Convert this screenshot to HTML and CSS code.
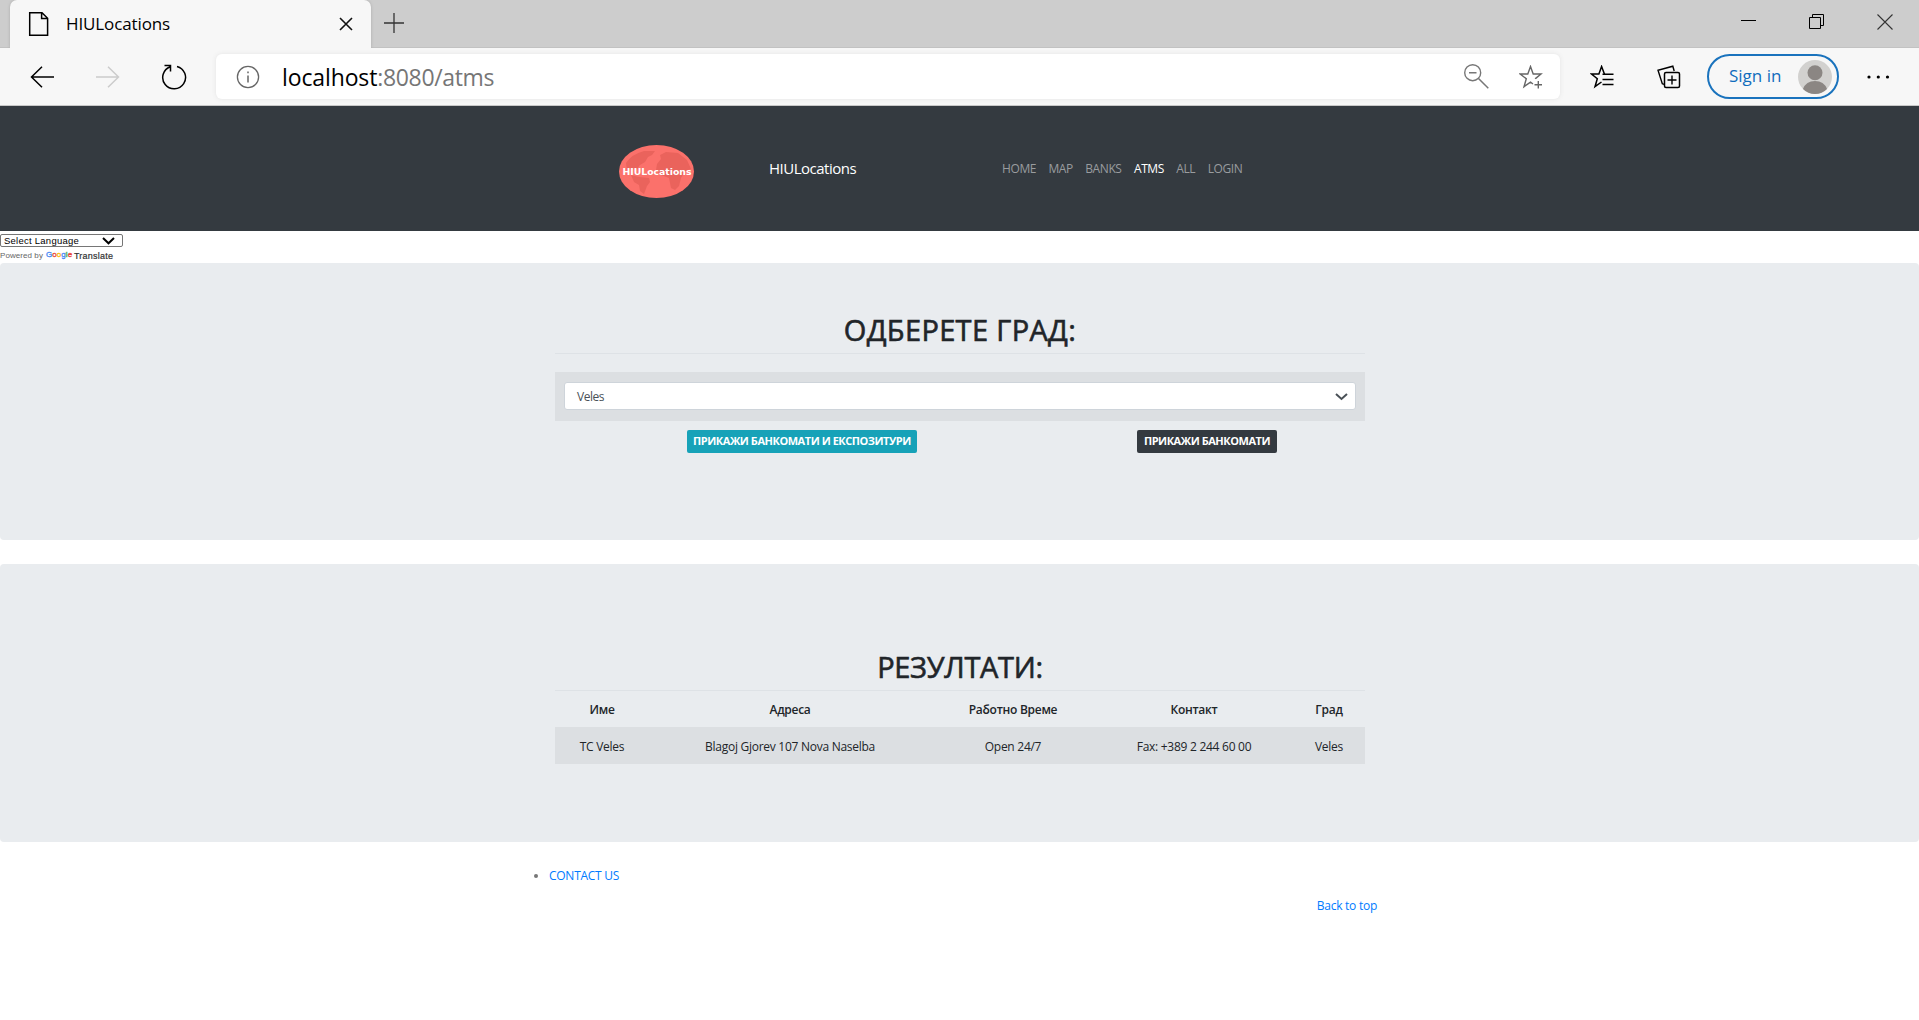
FILE: index.html
```html
<!DOCTYPE html>
<html lang="mk">
<head>
<meta charset="utf-8">
<title>HIULocations</title>
<link rel="stylesheet" href="styles.css">
</head>
<body>
<div class="tabstrip">
  <div class="tab">
    <svg class="tab-page" width="22" height="26" viewBox="0 0 22 26"><path d="M1.700 1.700H14l5.600 5.600V24.300H1.700zM13.600 1.700v5.900h6" fill="none" stroke="#000" stroke-width="1.500"/></svg>
    <span class="tab-title">HIULocations</span>
    <svg class="tab-close" width="14" height="14" viewBox="0 0 14 14"><path d="M1 1l12 12M13 1L1 13" stroke="#111" stroke-width="1.600"/></svg>
  </div>
  <svg class="newtab" width="20" height="20" viewBox="0 0 20 20"><path d="M10 0v20M0 10h20" stroke="#333" stroke-width="1.300"/></svg>
  <div class="window-buttons">
    <svg width="16" height="16" viewBox="0 0 16 16"><path d="M0 6.500h15" stroke="#000"/></svg>
    <svg width="16" height="16" viewBox="0 0 16 16"><path d="M.5 3.500h11v11H.5zM3.500 3.500V.5h11v11h-3" fill="none" stroke="#000"/></svg>
    <svg width="16" height="16" viewBox="0 0 16 16"><path d="M.5.5l15 15M15.500.5l-15 15" stroke="#333" stroke-width="1.100"/></svg>
  </div>
</div>
<div class="toolbar">
  <svg class="back" width="24" height="22" viewBox="0 0 24 22"><path d="M12 .7L1.500 11 12 21.300M1.500 11H24" fill="none" stroke="#000" stroke-width="1.500"/></svg>
  <svg class="forward" width="24" height="22" viewBox="0 0 24 22"><path d="M12 .7L22.500 11 12 21.300M22.500 11H0" fill="none" stroke="#ccc" stroke-width="1.500"/></svg>
  <svg class="reload" width="26" height="26" viewBox="0 0 26 26"><path d="M16 2.400A11.400 11.400 0 1 1 9.300 2.700M3.500 1.500H9.500V7.500" fill="none" stroke="#000" stroke-width="1.500"/></svg>
  <div class="address">
    <svg width="24" height="24" viewBox="0 0 24 24"><circle cx="12" cy="12" r="10.600" fill="none" stroke="#666" stroke-width="1.300"/><path d="M12 10.500v7M12 6.500v1.800" stroke="#666" stroke-width="1.500"/></svg>
    <span class="url">localhost<span class="url-rest">:8080/atms</span></span>
    <svg class="zoom" width="25" height="25" viewBox="0 0 25 25"><circle cx="8.700" cy="8.700" r="8" fill="none" stroke="#777" stroke-width="1.400"/><path d="M5 8.700h7.500M14.500 14.500l9.800 9.800" stroke="#777" stroke-width="1.500"/></svg>
    <svg class="star" width="24" height="24" viewBox="0 0 24 24"><path d="M17 13.700L16.700 13.400 22 9H14.200L11.500 1.500 8.800 9H1.200L7.300 13.800 5 21.700 11.500 17.200 14 19M19.300 16v7.500M15.500 19.700H23" fill="none" stroke="#666" stroke-width="1.400"/></svg>
  </div>
  <svg class="favorites" width="24" height="24" viewBox="0 0 24 24"><path d="M14.500 9.300L11.600 1.500 8.900 9H1.500L7.300 13.700 5 21.700 11.500 17" fill="none" stroke="#000" stroke-width="1.500"/><path d="M12.500 9.300H23.500M12.500 14.400H23.500M12.500 19.400H23.500" stroke="#000" stroke-width="1.500"/></svg>
  <svg class="collections" width="24" height="24" viewBox="0 0 24 24"><rect x="7.500" y="7.500" width="15" height="15" rx="1.500" fill="none" stroke="#000" stroke-width="1.500"/><path d="M15 10.500v9M10.500 15h9M7 19.300L5.300 18.700 1 5.200 15.800 1.200 17.200 6" fill="none" stroke="#000" stroke-width="1.400"/></svg>
  <div class="signin"><span>Sign in</span>
    <svg width="34" height="34" viewBox="0 0 34 34"><circle cx="17" cy="17" r="17" fill="#d2d1cf"/><circle cx="17" cy="12.800" r="7.500" fill="#8b8683"/><path d="M5 29q3-8 12-8t12 8q-5 5-12 5T5 29z" fill="#8b8683"/></svg>
  </div>
  <svg class="more" width="24" height="4" viewBox="0 0 24 4"><circle cx="2" cy="2" r="1.600"/><circle cx="11.300" cy="2" r="1.600"/><circle cx="20.500" cy="2" r="1.600"/></svg>
</div>
<header class="navbar">
  <svg class="logo" width="76" height="54" viewBox="0 0 76 54">
    <ellipse cx="37.500" cy="26.500" rx="37.500" ry="26.500" fill="#fb716b"/>
    <path d="M7 18Q13 9 25 6L36 6 33 10 29 12 26 17 21 20 18 24 12 23 8 26zM12 30L20 32 30 33 31 37 28 41 25 49 21 46 20 40 15 37zM38 19L42 14 41 10 47 7 59 8 68 15 72 24 66 26 62 33 60 41 56 45 52 43 50 33 42 30 37 25z" fill="#ea635c"/>
    <text x="3.500" y="30" textLength="69" lengthAdjust="spacingAndGlyphs">HIULocations</text>
  </svg>
  <a class="brand">HIULocations</a>
  <nav>
    <a>HOME</a>
    <a>MAP</a>
    <a>BANKS</a>
    <a class="active">ATMS</a>
    <a>ALL</a>
    <a>LOGIN</a>
  </nav>
</header>
<div class="translate">
  <div class="language"><span>Select Language</span><svg width="13" height="8" viewBox="0 0 13 8"><path d="M1 1l5.500 5.300L12 1" fill="none" stroke="#000" stroke-width="2"/></svg></div>
  <div class="powered"><span>Powered by</span><span class="google"><i class="b">G</i><i class="r">o</i><i class="y">o</i><i class="b">g</i><i class="g">l</i><i class="r">e</i></span><span class="word">Translate</span></div>
</div>
<section class="jumbotron">
  <div class="container">
    <h1 class="choose">ОДБЕРЕТЕ ГРАД:</h1>
    <div class="picker"><div class="select"><span>Veles</span><svg width="13" height="8" viewBox="0 0 13 8"><path d="M1 1l5.500 5L12 1" fill="none" stroke="#495057" stroke-width="2"/></svg></div></div>
    <div class="actions">
      <a class="btn info">ПРИКАЖИ БАНКОМАТИ И ЕКСПОЗИТУРИ</a>
      <a class="btn dark">ПРИКАЖИ БАНКОМАТИ</a>
    </div>
  </div>
</section>
<section class="jumbotron results">
  <div class="container">
    <h1>РЕЗУЛТАТИ:</h1>
    <table>
      <colgroup><col class="c1"><col class="c2"><col class="c3"><col class="c4"><col class="c5"></colgroup>
      <tr><th>Име</th><th>Адреса</th><th>Работно Време</th><th>Контакт</th><th>Град</th></tr>
      <tr class="row"><td>TC Veles</td><td>Blagoj Gjorev 107 Nova Naselba</td><td>Open 24/7</td><td>Fax: +389 2 244 60 00</td><td>Veles</td></tr>
    </table>
  </div>
</section>
<footer>
  <ul><li><a>CONTACT US</a></li></ul>
  <p><a>Back to top</a></p>
</footer>
</body>
</html>
```
FILE: styles.css
```css
* { box-sizing: border-box; }
body { margin: 0; height: 1020px; overflow: hidden; background: #fff; color: #212529; font: 12px/18px "Open Sans", "Noto Sans", sans-serif; white-space: nowrap; }
svg { display: block; flex: none; }

.tabstrip { display: flex; height: 48px; background: #cdcdcd; box-shadow: inset 0 -1px #c2c2c2; }
.tab { display: flex; align-items: center; width: 361px; margin-left: 10px; background: #f7f7f7; border-radius: 7px 7px 0 0; box-shadow: 0 0 3px #aaa; clip-path: inset(0 -4px 0 -4px); }
.tab-page { margin: 0 0 0 18px; }
.tab-title { margin-left: 16px; font-size: 17px; letter-spacing: -.12px; color: #000; flex: 1; }
.tab-close { margin-right: 18px; }
.newtab { margin: 13px 0 0 13px; }
.window-buttons { display: flex; gap: 52px; margin: 14px 26px 0 auto; }

.toolbar { display: flex; align-items: center; height: 58px; background: #f7f7f7; border-bottom: 1px solid #c8c8c8; }
.back { margin-left: 30px; }
.forward { margin-left: 42px; }
.reload { margin-left: 41px; }
.address { display: flex; align-items: center; width: 1344px; height: 45px; margin-left: 29px; padding-left: 20px; background: #fff; border-radius: 6px; box-shadow: 0 0 5px #e4e4e4; }
.url { flex: 1; margin-left: 22px; font-size: 23px; line-height: 30px; letter-spacing: -.12px; color: #000; }
.url-rest { color: #767676; letter-spacing: -.35px; }
.zoom { margin-right: 30px; }
.star { margin-right: 17px; }
.favorites { margin-left: 30px; }
.collections { margin-left: 43px; }
.signin { display: flex; align-items: center; justify-content: space-between; width: 132px; height: 45px; margin-left: 26px; padding: 0 5px 2px 20px; border: 2px solid #1a73bd; border-radius: 23px; color: #0f6cbd; font-size: 17px; }
.signin svg { margin-top: 2px; }
.more { margin-left: 28px; }

.navbar { display: flex; height: 125px; background: #343a40; }
.logo { margin: 39px 0 0 619px; }
.logo text { font: bold 8px "DejaVu Sans", sans-serif; fill: #fff; }
.brand { width: 233px; margin: 53px 0 0 74px; color: #fff; font-size: 15px; letter-spacing: -.5px; }
nav { display: flex; gap: 12.400px; margin-top: 54px; color: #999c9f; letter-spacing: -.4px; }
.active { color: #fff; }

.translate { height: 32px; padding-top: 3px; font: 9.500px/12px "Liberation Sans", Arial, sans-serif; }
.language { display: flex; align-items: center; justify-content: space-between; width: 123px; height: 13px; padding: 0 7px 0 3px; border: 1px solid #767676; border-radius: 2px; color: #000; letter-spacing: .25px; }
.powered { display: flex; margin-top: 3px; color: #666; font-size: 8px; letter-spacing: .07px; }
.word { color: #333; font-size: 9px; letter-spacing: .22px; -webkit-text-stroke: .2px #333; }
.google { width: 24px; margin: -1px 4px 0 3px; font-size: 8px; -webkit-text-stroke: .3px; }
.google i { font-style: normal; }
.b { color: #4285f4; }
.r { color: #ea4335; }
.y { color: #fbbc05; }
.g { color: #34a853; }

.jumbotron { height: 277px; padding-top: 48px; background: #e9ecef; border-radius: 4px; }
.container { width: 810px; margin-left: 555px; }
h1 { margin: 0; padding-bottom: 5px; border-bottom: 1px solid #dee2e6; font-size: 29px; line-height: 37px; font-weight: 400; letter-spacing: -.3px; text-align: center; -webkit-text-stroke: .6px #212529; }
.choose { letter-spacing: .33px; }
.picker { height: 49px; margin-top: 18px; padding: 10px 9px; background: #dcdfe2; }
.select { display: flex; align-items: center; justify-content: space-between; height: 28px; padding: 2px 7px 0 12px; border: 1px solid #ced4da; border-radius: 3px; background: #fff; color: #495057; letter-spacing: -.5px; }
.select svg { margin-top: -1px; }
.actions { display: flex; margin-top: 9px; }
.btn { display: flex; align-items: center; justify-content: center; height: 23px; padding-bottom: 1px; border-radius: 2px; color: #fff; font-size: 11px; font-weight: 700; letter-spacing: -.46px; }
.info { width: 230px; margin-left: 132px; background: #17a2b8; }
.dark { width: 140px; margin-left: 220px; background: #343a40; }
.results { margin-top: 24px; height: 278px; padding-top: 84px; }
table { width: 810px; table-layout: fixed; border-collapse: collapse; text-align: center; }
th, td { height: 37px; padding: 2px 0 0; letter-spacing: -.27px; }
th { height: 36px; font-weight: 600; }
.row { background: #dcdfe2; }
.c1 { width: 94px; }
.c2 { width: 282px; }
.c3 { width: 164px; }
.c4 { width: 198px; }
.c5 { width: 72px; }

footer { width: 857px; margin: 25px auto 0; color: #777; letter-spacing: -.26px; }
ul { margin: 0; padding-left: 18px; }
footer a { color: #007bff; }
footer p { margin: 12px 11px 0 0; text-align: right; }
```
